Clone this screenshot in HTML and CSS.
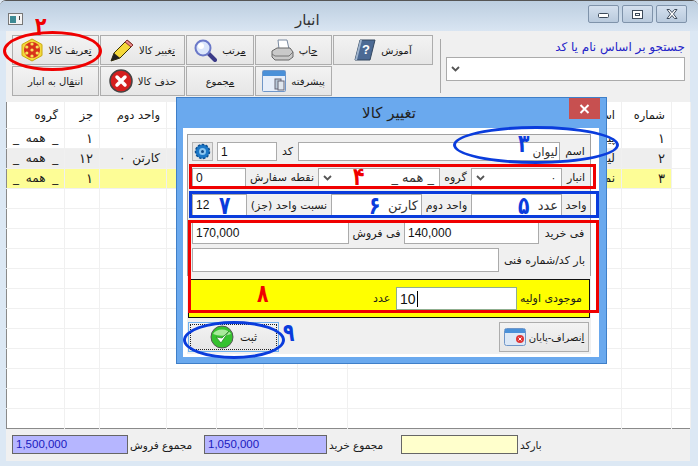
FILE: index.html
```html
<!DOCTYPE html>
<html lang="fa">
<head>
<meta charset="utf-8">
<title>انبار</title>
<link rel="stylesheet" href="styles.css">
</head>
<body>
<div class="window">
  <header class="titlebar">
    <svg class="app-icon" width="15" height="12" viewBox="0 0 15 12"><rect x=".5" y=".5" width="14" height="11" fill="#f4f4f4" stroke="#777"/><rect x="2" y="3" width="6" height="7" fill="#3d8a94"/><rect x="11" y="3" width="1" height="4" fill="#444"/></svg>
    <span class="win-title">انبار</span>
    <div class="win-controls">
      <span class="win-btn"><svg width="13" height="9" viewBox="0 0 13 9"><rect x="1.500" y="3.500" width="10" height="4" rx="1" fill="#fff" stroke="#3c4a5a"/></svg></span>
      <span class="win-btn"><svg width="13" height="11" viewBox="0 0 13 11"><rect x="1.500" y="1.500" width="10" height="8" fill="#fff" stroke="#3c4a5a"/><rect x="4.500" y="4.500" width="4" height="2" fill="#fff" stroke="#3c4a5a"/></svg></span>
      <span class="win-btn"><svg width="14" height="12" viewBox="0 0 14 12"><path d="M2 1.500h2.500L7 4.500 9.500 1.500H12L8.500 6 12 10.500H9.500L7 7.500 4.500 10.500H2L5.500 6z" fill="#fff" stroke="#3c4a5a"/></svg></span>
    </div>
  </header>

  <div class="client">
    <section class="toolbar">
      <div class="tool-grid">
        <button class="tool"><svg width="24" height="24" viewBox="0 0 24 24"><path d="M12 1l10 5.500v11L12 23 2 17.500v-11z" fill="#f3d93c" stroke="#c9a80e"/><circle cx="12" cy="12" r="8" fill="#d8321a"/><g fill="#f7e25a"><circle cx="12" cy="6" r="1.600"/><circle cx="12" cy="18" r="1.600"/><circle cx="6.800" cy="9" r="1.600"/><circle cx="17.200" cy="9" r="1.600"/><circle cx="6.800" cy="15" r="1.600"/><circle cx="17.200" cy="15" r="1.600"/><circle cx="12" cy="12" r="1.600"/></g></svg><span><u>ت</u>عریف کالا</span></button>
        <button class="tool"><svg width="24" height="24" viewBox="0 0 24 24"><path d="M1 23l3-8L17 2l6 5L10 20z" fill="#f5d83a" stroke="#3a3000"/><path d="M17 2l6 5-2 2-6-5z" fill="#e88a8a" stroke="#8a3030"/><path d="M1 23l3-8 6 5z" fill="#222"/></svg><span><u>ت</u>غییر کالا</span></button>
        <button class="tool"><svg width="23" height="23" viewBox="0 0 23 23"><path d="M14 14l7 7" stroke="#3b3b88" stroke-width="4" stroke-linecap="round"/><circle cx="9" cy="9" r="7.500" fill="#dbe6fb" stroke="#6a78c8" stroke-width="2"/><circle cx="7" cy="7" r="3" fill="#fff"/></svg><span><u>م</u>رتب</span></button>
        <button class="tool"><svg width="24" height="24" viewBox="0 0 24 24"><path d="M8 2h9l2 9H9z" fill="#fff" stroke="#7a8aa0"/><path d="M2 13l5-3h13l3 4v5l-4 3H5l-3-3z" fill="#c9c9c9" stroke="#666"/><path d="M2 16l3 2h14l4-4" fill="none" stroke="#777"/></svg><span><u>چ</u>اپ</span></button>
        <button class="tool"><svg width="22" height="22" viewBox="0 0 22 22"><path d="M6 1h15l-5 20H1z" fill="#4c6a94" stroke="#33475f"/><path d="M1 21l5-20 2 0-5 20z" fill="#9fb3cc"/><text x="8" y="15" class="book-mark">?</text></svg><span>آموزش</span></button>
        <button class="tool"><span>انت<u>ق</u>ال به انبار</span></button>
        <button class="tool"><svg width="24" height="24" viewBox="0 0 24 24"><circle cx="12" cy="12" r="11" fill="#d41f1f" stroke="#444" stroke-width="1.500"/><path d="M8 8l8 8M16 8l-8 8" stroke="#fff" stroke-width="3.500" stroke-linecap="round"/></svg><span>حذف کالا</span></button>
        <button class="tool"><span><u>م</u>جموع</span></button>
        <button class="tool"><svg width="24" height="22" viewBox="0 0 24 22"><rect x=".5" y=".5" width="23" height="21" rx="1" fill="#e6eefa" stroke="#6f96c8"/><rect x="1" y="1" width="22" height="5" fill="#4a90d8"/><rect x="13" y="9" width="6" height="10" fill="#b8c8d8" stroke="#667"/><rect x="16" y="11" width="6" height="9" fill="#dfe6ee" stroke="#667"/></svg><span><u>پ</u>یشرفته</span></button>
      </div>
      <div class="separator"></div>
      <div class="search">
        <label class="search-label">جستجو بر اساس نام یا کد</label>
        <div class="combo search-combo"><svg class="chev" width="9" height="6" viewBox="0 0 9 6"><path d="M1 1l3.500 3.500L8 1" fill="none" stroke="#555" stroke-width="1.800"/></svg></div>
      </div>
    </section>

    <table class="grid">
      <colgroup>
        <col class="c-58"><col class="c-35"><col class="c-67"><col class="c-50"><col class="c-47"><col class="c-34"><col class="c-50"><col class="c-274"><col class="c-50"><col class="c-rest">
      </colgroup>
      <thead>
        <tr><th>گروه</th><th>جز</th><th>واحد دوم</th><th></th><th></th><th></th><th></th><th>اسم</th><th>شماره</th><th></th></tr>
      </thead>
      <tbody>
        <tr><td>_ همه _</td><td class="digit">۱</td><td></td><td></td><td></td><td></td><td></td><td>پیاله</td><td class="digit">۱</td><td class="blank"></td></tr>
        <tr class="alt"><td>_ همه _</td><td class="digit">۱۲</td><td>کارتن ۰</td><td></td><td></td><td></td><td></td><td>لیوان</td><td class="digit">۲</td><td class="blank"></td></tr>
        <tr class="current"><td>_ همه _</td><td class="digit">۱</td><td></td><td></td><td></td><td></td><td></td><td>نمک</td><td class="digit">۳</td><td class="blank"></td></tr>
      </tbody>
      <tbody>
        <tr><td></td><td></td><td></td><td></td><td></td><td></td><td></td><td></td><td></td><td class="blank"></td></tr>
        <tr><td></td><td></td><td></td><td></td><td></td><td></td><td></td><td></td><td></td><td class="blank"></td></tr>
        <tr><td></td><td></td><td></td><td></td><td></td><td></td><td></td><td></td><td></td><td class="blank"></td></tr>
        <tr><td></td><td></td><td></td><td></td><td></td><td></td><td></td><td></td><td></td><td class="blank"></td></tr>
        <tr><td></td><td></td><td></td><td></td><td></td><td></td><td></td><td></td><td></td><td class="blank"></td></tr>
        <tr><td></td><td></td><td></td><td></td><td></td><td></td><td></td><td></td><td></td><td class="blank"></td></tr>
        <tr><td></td><td></td><td></td><td></td><td></td><td></td><td></td><td></td><td></td><td class="blank"></td></tr>
        <tr><td></td><td></td><td></td><td></td><td></td><td></td><td></td><td></td><td></td><td class="blank"></td></tr>
        <tr><td></td><td></td><td></td><td></td><td></td><td></td><td></td><td></td><td></td><td class="blank"></td></tr>
        <tr><td></td><td></td><td></td><td></td><td></td><td></td><td></td><td></td><td></td><td class="blank"></td></tr>
        <tr><td></td><td></td><td></td><td></td><td></td><td></td><td></td><td></td><td></td><td class="blank"></td></tr>
        <tr class="last"><td></td><td></td><td></td><td></td><td></td><td></td><td></td><td></td><td></td><td class="blank"></td></tr>
      </tbody>
    </table>

    <footer class="totals">
      <output class="total sale">1,500,000</output>
      <span class="total-label sale-label">مجموع فروش</span>
      <output class="total buy">1,050,000</output>
      <span class="total-label buy-label">مجموع خرید</span>
      <output class="total barcode"></output>
      <span class="total-label">بارکد</span>
    </footer>
  </div>
</div>

<div class="dialog">
  <div class="dialog-head">
    <span class="dialog-title">تغییر کالا</span>
    <span class="dialog-close"><svg width="11" height="10" viewBox="0 0 11 10"><path d="M1.500 1l8 8M9.500 1l-8 8" stroke="#fff" stroke-width="2"/></svg></span>
  </div>
  <div class="dialog-body">
    <div class="panel">
      <div class="form-row r1">
        <span class="gear"><svg width="17" height="17" viewBox="0 0 17 17"><circle cx="8.500" cy="8.500" r="7" fill="#1c78c8" stroke="#0d4f90" stroke-width="1.500" stroke-dasharray="2.500 1.500"/><circle cx="8.500" cy="8.500" r="3.500" fill="#8cc6f0"/><circle cx="8.500" cy="8.500" r="1.500" fill="#124a88"/></svg></span>
        <span class="field ltr">1</span>
        <label>کد</label>
        <span class="field rtl name">لیوان</span>
        <label>اسم</label>
      </div>
      <div class="form-row r2">
        <span class="field ltr">0</span>
        <label>نقطه سفارش</label>
        <span class="combo"><svg class="chev" width="9" height="6" viewBox="0 0 9 6"><path d="M1 1l3.500 3.500L8 1" fill="none" stroke="#555" stroke-width="1.800"/></svg><span class="combo-text big">_ همه _</span></span>
        <label>گروه</label>
        <span class="combo"><svg class="chev" width="9" height="6" viewBox="0 0 9 6"><path d="M1 1l3.500 3.500L8 1" fill="none" stroke="#555" stroke-width="1.800"/></svg><span class="combo-text">۰</span></span>
        <label>انبار</label>
      </div>
      <div class="form-row r3">
        <span class="field ltr">12</span>
        <label>نسبت واحد (جز)</label>
        <span class="field rtl big">کارتن</span>
        <label>واحد دوم</label>
        <span class="field rtl big">عدد</span>
        <label>واحد</label>
      </div>
      <div class="form-row r4">
        <span class="field ltr">170,000</span>
        <label>فی فروش</label>
        <span class="field ltr">140,000</span>
        <label>فی خرید</label>
      </div>
      <div class="form-row r5">
        <span class="field"></span>
        <label>بار کد/شماره فنی</label>
      </div>
    </div>
    <div class="stock">
      <label class="stock-unit">عدد</label>
      <span class="field ltr focus">10<i class="caret"></i></span>
      <label class="stock-label">موجودی اولیه</label>
    </div>
    <div class="actions">
      <button class="act act-save"><span class="act-inner"><span>ثبت</span><svg width="24" height="24" viewBox="0 0 24 24"><circle cx="12" cy="12" r="11" fill="#35c22f" stroke="#555"/><path d="M3 9a10 8 0 0 1 18 0 12 5 0 0 1-18 0z" fill="#a7ea9a"/><path d="M6 12l5 6 8-12-7 7z" fill="#fff" stroke="#2a8a24" stroke-width=".8"/></svg></span></button>
      <button class="act act-cancel"><span><u>ا</u>نصراف-پایان</span><svg width="22" height="18" viewBox="0 0 22 18"><rect x=".5" y=".5" width="21" height="17" rx="2" fill="#dce8f6" stroke="#6f96c8"/><rect x="1" y="1" width="20" height="4" fill="#4a90d8"/><circle cx="16" cy="11" r="4" fill="#e03434"/><path d="M14.500 9.500l3 3M17.500 9.500l-3 3" stroke="#fff"/></svg></button>
    </div>
  </div>
</div>

<div class="marks" aria-hidden="true">
  <span class="mark ring red m-ring2"></span>
  <span class="mark ring blue m-ring3"></span>
  <span class="mark ring blue m-ring9"></span>
  <span class="mark box red m-box4"></span>
  <span class="mark box blue m-box5"></span>
  <span class="mark box red m-box8"></span>
  <span class="num red n2">۲</span>
  <span class="num blue n3">۳</span>
  <span class="num red n4">۴</span>
  <span class="num blue n5">۵</span>
  <span class="num blue n6">۶</span>
  <span class="num blue n7">۷</span>
  <span class="num red n8">۸</span>
  <span class="num blue n9">۹</span>
</div>
</body>
</html>
```

FILE: styles.css
```css
* { box-sizing: border-box; }
html, body { margin: 0; height: 100%; overflow: hidden; }
body {
  width: 698px;
  height: 466px;
  position: relative;
  font-family: "DejaVu Sans", sans-serif;
  font-size: 10px;
  color: #1a1a1a;
  background: #dce8f4;
}
u { text-underline-offset: 1px; }

/* main window */
.window {
  width: 698px;
  height: 466px;
  display: flex;
  flex-direction: column;
  background: #dce8f4;
  border-top: 1px solid #555;
  border-top-right-radius: 6px;
  border-top-left-radius: 6px;
  overflow: hidden;
}
.titlebar {
  height: 30px;
  flex: none;
  display: flex;
  align-items: center;
  padding: 0 11px 0 8px;
  background: linear-gradient(#bccee0, #d9e5f2);
}
.app-icon { flex: none; margin-top: 6px; }
.win-title {
  margin-left: 272px;
  font-size: 15px;
  line-height: 18px;
  color: #333;
  margin-top: 8px;
}
.win-controls { margin-left: auto; display: flex; gap: 3px; margin-top: -4px; }
.win-btn {
  width: 31px;
  height: 18px;
  display: flex;
  align-items: center;
  justify-content: center;
  border: 1px solid #7f93aa;
  border-radius: 2px;
  background: linear-gradient(#d4e0ee, #b9cadd);
}

.client {
  flex: 1;
  margin: 0 8px 5px 6px;
  background: #f0f0f0;
  display: flex;
  flex-direction: column;
  min-height: 0;
}

/* toolbar */
.toolbar {
  height: 71px;
  flex: none;
  display: flex;
  padding: 4px 5px 0 6px;
}
.tool-grid {
  display: grid;
  grid-template-columns: 87px 85px 68px 77px 100px;
  grid-auto-rows: 30px;
  gap: 1px;
  height: 61px;
}
.tool {
  display: flex;
  align-items: center;
  justify-content: center;
  gap: 5px;
  padding: 0;
  border: 1px solid #adadad;
  background: linear-gradient(#f3f3f3, #e6e6e6);
  font: 10px "DejaVu Sans", sans-serif;
  color: #1a1a1a;
  white-space: nowrap;
}
.book-mark { font: bold 13px "Liberation Sans", sans-serif; fill: #fff; }
.separator {
  width: 1px;
  height: 54px;
  margin: 4px 5px 0 7px;
  background: #a8a8a8;
}
.search { flex: 1; display: flex; flex-direction: column; }
.search-label {
  text-align: right;
  color: #2424c8;
  font-size: 12px;
  line-height: 15px;
  margin: 5px 0 2px;
  white-space: nowrap;
}
.combo {
  display: flex;
  align-items: center;
  justify-content: space-between;
  background: #fff;
  border: 1px solid #ababab;
  padding: 0 5px 0 4px;
}
.search-combo { height: 24px; }
.chev { flex: none; }

/* data grid */
.grid {
  width: 684px;
  height: 326px;
  flex: none;
  table-layout: fixed;
  border-collapse: collapse;
  background: #fff;
  border-left: 1px solid #8a8a8a;
  border-bottom: 1px solid #8a8a8a;
}
.c-58 { width: 58px; }
.c-35 { width: 35px; }
.c-67 { width: 67px; }
.c-50 { width: 50px; }
.c-47 { width: 47px; }
.c-34 { width: 34px; }
.c-274 { width: 274px; }
.c-rest { width: 19px; }
.grid th, .grid td {
  border-right: 1px solid #f0f0f0;
  border-bottom: 1px solid #f0f0f0;
  padding: 0 6px;
  text-align: right;
  font-size: 12px;
  font-weight: normal;
  white-space: nowrap;
  overflow: hidden;
  word-spacing: 3px;
}
.grid th { height: 26px; font-size: 11.5px; word-spacing: 0; }
.grid td { height: 20px; }
.grid td.digit { font-size: 13px; }
.alt td { background: #eeeeee; }
.current td { background: #fdfd96; }
.grid td.blank { background: #fff; }
.last td { border-bottom: 0; }

/* totals */
.totals {
  flex: 1;
  display: flex;
  align-items: center;
  padding: 0 0 0 6px;
}
.total {
  height: 19px;
  display: block;
  border: 1px solid #666;
  font: 11.5px/17px "Liberation Sans", sans-serif;
  color: #1a1ac0;
  padding-left: 3px;
  flex: none;
}
.sale, .buy { background: #b6b6ff; }
.sale { width: 116px; }
.buy { width: 123px; }
.barcode { width: 117px; background: #ffffcc; }
.total-label { font-size: 10.5px; white-space: nowrap; padding-left: 2px; }
.sale-label { width: 76px; }
.buy-label { width: 74px; }

/* dialog: floats above the main window */
.dialog {
  position: absolute;
  left: 176px;
  top: 97px;
  width: 431px;
  height: 267px;
  display: flex;
  flex-direction: column;
  background: #6aa9ee;
  border: 1px solid #3f7fc8;
  padding: 0 7px 6px 6px;
}
.dialog-head {
  height: 30px;
  flex: none;
  display: flex;
  justify-content: center;
  position: relative;
}
.dialog-title { font-size: 15px; line-height: 31px; color: #222; padding-right: 4px; }
.dialog-close {
  position: absolute;
  right: -1px;
  top: 0;
  width: 31px;
  height: 21px;
  background: #c75050;
  display: flex;
  align-items: center;
  justify-content: center;
}
.dialog-body {
  flex: 1;
  background: #f0f0f0;
  border-top: 6px solid #fff;
  border-left: 4px solid #fff;
  border-right: 8px solid #fff;
  border-bottom: 3px solid #fff;
  display: flex;
  flex-direction: column;
  min-height: 0;
  width: 416px;
}
.panel {
  height: 142px;
  flex: none;
  border: 1px solid #a0a0a0;
  border-bottom: 0;
  padding: 7px 0 0 4px;
  width: 404px;
}
.form-row { display: grid; align-items: stretch; }
.form-row label {
  display: flex;
  align-items: center;
  justify-content: center;
  white-space: nowrap;
  font-size: 11px;
}
.r1 { grid-template-columns: 25px 60px 21px 262px 30px; height: 19px; margin-bottom: 7px; }
.r2 { grid-template-columns: 54px 72px 122px 31px 91px 28px; height: 19px; margin-bottom: 7px; }
.r3 { grid-template-columns: 55px 84px 91px 49px 91px 28px; height: 22px; margin-bottom: 6px; }
.r4 { grid-template-columns: 157px 55px 135px 51px; height: 22px; margin-bottom: 4px; }
.r5 { grid-template-columns: 307px 91px; height: 24px; }
.gear {
  width: 21px;
  display: flex;
  align-items: center;
  justify-content: center;
  border: 1px solid #b5b5b5;
  background: #e6e6e6;
}
.field {
  display: flex;
  align-items: center;
  background: #fff;
  border: 1px solid #ababab;
  padding: 0 3px;
  font: 12px "Liberation Sans", sans-serif;
  color: #111;
  white-space: nowrap;
}
.field.rtl { justify-content: flex-end; font: 11px "DejaVu Sans", sans-serif; color: #333; }
.field.big, .combo-text.big { font-size: 13px; color: #333; }
.field.name { font-size: 12px; padding-right: 1px; }
.combo-text { font-size: 10px; }
.stock {
  height: 39px;
  flex: none;
  margin-top: 3px;
  width: 402px;
  margin-left: 1px;
  background: #ffff00;
  border: 1px solid #111;
  display: flex;
  align-items: center;
  padding-left: 184px;
}
.stock-unit { width: 23px; font-size: 11px; white-space: nowrap; }
.stock .field { width: 121px; height: 23px; border-color: #8fae8f; font-size: 14px; }
.stock-label { margin-left: 3px; font-size: 11px; white-space: nowrap; }
.caret { width: 1px; height: 16px; background: #000; margin-left: 1px; }
.actions {
  display: flex;
  justify-content: space-between;
  padding: 4px 2px 0 1px;
}
.act {
  height: 30px;
  padding: 0;
  display: flex;
  align-items: center;
  justify-content: center;
  gap: 3px;
  border: 1px solid #adadad;
  background: linear-gradient(#f3f3f3, #e6e6e6);
  font: 10px "DejaVu Sans", sans-serif;
  color: #1a1a1a;
}
.act-save { width: 91px; border-color: #6fb0ee; }
.act-inner {
  display: flex;
  flex-direction: row-reverse;
  align-items: center;
  justify-content: center;
  gap: 6px;
  width: 87px;
  height: 26px;
  border: 1px dotted #222;
  font-size: 11px;
}
.act-cancel { width: 90px; flex-direction: row-reverse; }

/* annotation marks drawn over the screenshot */
.marks { position: absolute; left: 0; top: 0; width: 698px; height: 466px; pointer-events: none; }
.mark { position: absolute; }
.ring { border-radius: 50%; border: 3px solid; }
.box { border: 3px solid; }
.mark.red { border-color: #f00000; }
.mark.blue { border-color: #0a3cdc; }
.m-ring2 { left: 3px; top: 31px; width: 99px; height: 40px; }
.m-ring3 { left: 453px; top: 126px; width: 166px; height: 38px; }
.m-ring9 { left: 183px; top: 321px; width: 102px; height: 38px; }
.m-box4 { left: 189px; top: 164px; width: 407px; height: 25px; }
.m-box5 { left: 189px; top: 191px; width: 410px; height: 27px; }
.m-box8 { left: 188px; top: 220px; width: 411px; height: 93px; }
.num {
  position: absolute;
  font-size: 25px;
  line-height: 26px;
  font-weight: bold;
  transform: scaleX(.75);
  transform-origin: left top;
}
.num.red { color: #f00000; }
.num.blue { color: #0a3cdc; }
.n2 { left: 35px; top: 14px; }
.n3 { left: 518px; top: 131px; }
.n4 { left: 353px; top: 164px; }
.n5 { left: 518px; top: 193px; }
.n6 { left: 369px; top: 193px; }
.n7 { left: 219px; top: 193px; }
.n8 { left: 257px; top: 281px; }
.n9 { left: 283px; top: 320px; }
```
